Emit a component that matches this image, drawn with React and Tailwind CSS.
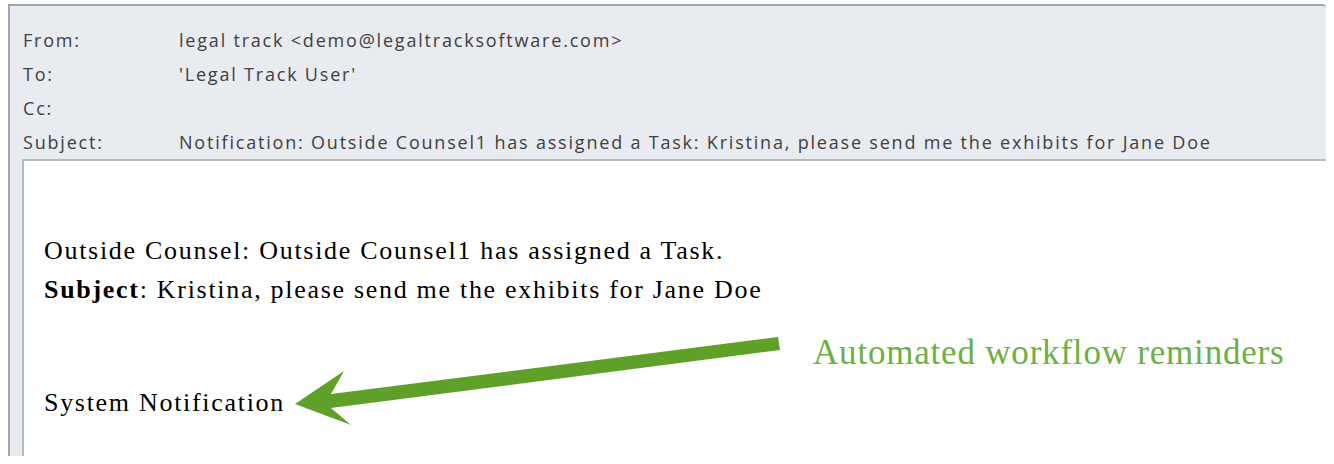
const headerRows = [
  { label: 'From:', value: 'legal track <demo@legaltracksoftware.com>' },
  { label: 'To:', value: "'Legal Track User'" },
  { label: 'Cc:', value: '' },
  {
    label: 'Subject:',
    value:
      'Notification: Outside Counsel1 has assigned a Task: Kristina, please send me the exhibits for Jane Doe',
  },
]

function Arrow() {
  return (
    <svg
      className="pointer-events-none absolute left-0 top-0"
      width="1334"
      height="464"
      viewBox="0 0 1334 464"
    >
      <polygon
        fill="#5fa128"
        points="295,404 344,371 331,394 778,337 780,350 331,408 351,425"
      />
    </svg>
  )
}

export default function App() {
  return (
    <div className="relative h-[464px] w-[1334px] overflow-hidden bg-white">
      <div className="ml-[8px] mt-[4px] w-[1318px] rounded-tr-[4px] border-l-[2px] border-t-[2px] border-[#a2a6ac] bg-[#e8ebf0]">
        <div
          className="pl-[13px] pt-[17px] text-[18px] tracking-[1.8px] text-[#404040]"
          style={{ fontFamily: '"Open Sans", "Noto Sans", sans-serif' }}
        >
          {headerRows.map((row) => (
            <div key={row.label} className="flex h-[34px] items-center">
              <span className="w-[156px] shrink-0">{row.label}</span>
              <span className="whitespace-nowrap">{row.value}</span>
            </div>
          ))}
        </div>
        <div className="ml-[12px] h-[297px] border-l-[2px] border-t-[2px] border-[#b5bbc3] bg-white">
          <div
            className="pl-[20px] pt-[70px] text-[26px] leading-[39px] tracking-[1.7px] text-black"
            style={{ fontFamily: '"Liberation Serif", serif' }}
          >
            <p>Outside Counsel: Outside Counsel1 has assigned a Task.</p>
            <p>
              <b>Subject</b>: Kristina, please send me the exhibits for Jane Doe
            </p>
            <p className="mt-[22px] pl-[769px] text-[35px] leading-[44px] tracking-[0.8px] text-[#6cb044]">
              Automated workflow reminders
            </p>
            <p className="mt-[8px]">System Notification</p>
          </div>
        </div>
      </div>
      <Arrow />
    </div>
  )
}
